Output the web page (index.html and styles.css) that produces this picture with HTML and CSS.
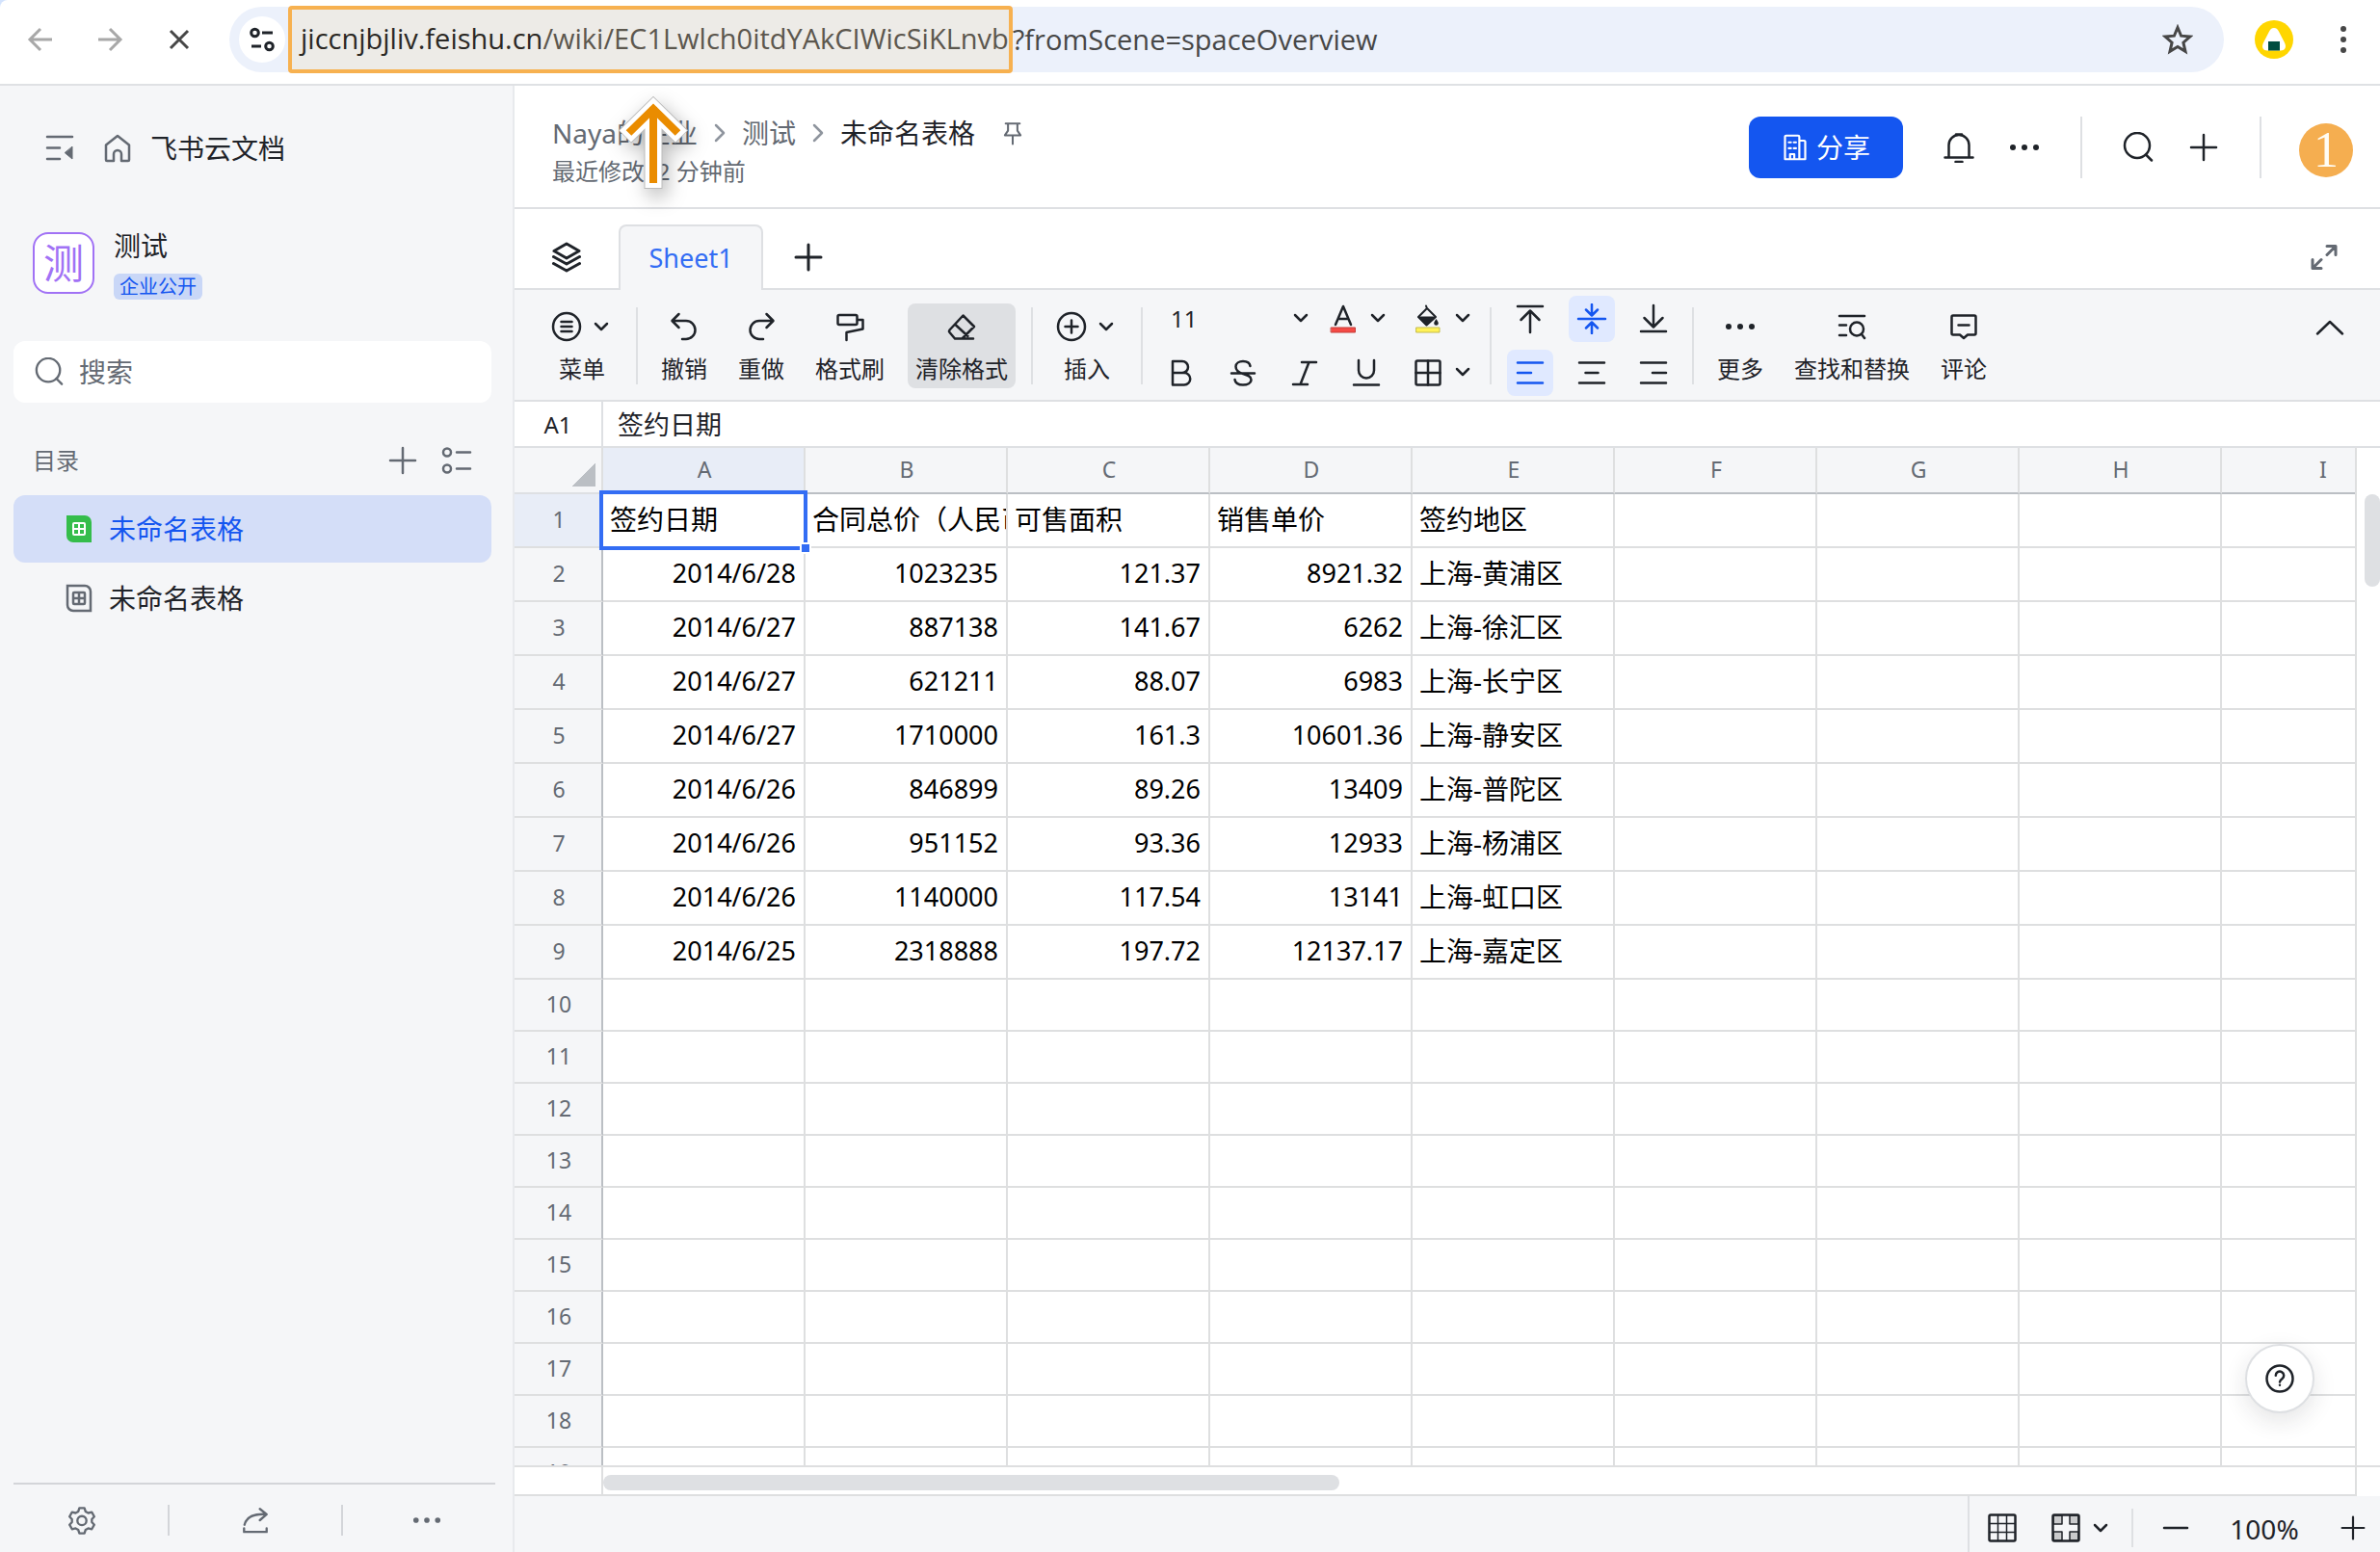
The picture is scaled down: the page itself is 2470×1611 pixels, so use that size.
FILE: index.html
```html
<!DOCTYPE html>
<html lang="zh-CN">
  <head>
    <meta charset="UTF-8" />
    <meta name="viewport" content="width=device-width, initial-scale=1.0" />
    <title>未命名表格</title>
    <link rel="stylesheet" href="styles.css">
  </head>
  <body>
    <!-- shared icons -->
    <svg class="sprite" aria-hidden="true">
      <symbol id="chevron" viewBox="0 0 24 24"><path d="M6 9l6 6 6-6" /></symbol>
      <symbol id="plus" viewBox="0 0 32 32"><path d="M16 3v26M3 16h26" /></symbol>
      <symbol id="dots" viewBox="0 0 32 32"><g fill="currentColor" stroke="none"><circle cx="4" cy="16" r="3" /><circle cx="16" cy="16" r="3" /><circle cx="28" cy="16" r="3" /></g></symbol>
      <symbol id="search" viewBox="0 0 32 32"><circle cx="15" cy="14" r="13" /><path d="M24 23.500l6 6" /></symbol>
      <symbol id="crumb" viewBox="0 0 16 28"><path d="M4 6l8 8-8 8" /></symbol>
    </svg>

    <header class="browser">
      <button class="nav back" aria-label="后退"><svg class="icon" viewBox="0 0 32 32"><path d="M28 16H5M16 5L5 16l11 11" /></svg></button>
      <button class="nav forward" aria-label="前进"><svg class="icon" viewBox="0 0 32 32"><path d="M4 16h23M16 5l11 11-11 11" /></svg></button>
      <button class="nav stop" aria-label="停止"><svg class="icon" viewBox="0 0 32 32"><path d="M7 7l18 18M25 7L7 25" /></svg></button>
      <div class="address">
        <button class="site-info" aria-label="网站信息"><svg class="icon" viewBox="0 0 32 32"><circle cx="8.500" cy="9" r="3.800" /><path d="M16 9h11M5 23h10" /><circle cx="23.500" cy="23" r="3.800" /></svg></button>
        <div class="url" role="textbox" aria-label="地址栏"><span class="marked"><span class="host">jiccnjbjliv.feishu.cn</span>/wiki/EC1Lwlch0itdYAkCIWicSiKLnvb</span><span>?fromScene=spaceOverview</span></div>
        <button class="star" aria-label="收藏"><svg class="icon" viewBox="0 0 32 32"><path d="M16 3.500l3.600 8.700 9.400.8-7.100 6.200 2.100 9.100-8-4.800-8 4.800 2.100-9.100L3 13l9.400-.8z" /></svg></button>
      </div>
      <button class="profile" aria-label="用户"><svg viewBox="0 0 40 40" width="40" height="40"><circle cx="20" cy="20" r="20" fill="#ffd600" /><path d="M20 8c2.500 0 4 1.500 5.300 4.200l5.400 10.600c3 5.800.3 8.700-3.700 8.700H13c-4 0-6.700-2.900-3.700-8.700l5.400-10.600C16 9.500 17.500 8 20 8z" fill="#fff" /><rect x="14" y="22" width="12" height="9.500" fill="#004d40" /></svg></button>
      <button class="kebab" aria-label="更多"><svg viewBox="0 0 8 32" width="8" height="32"><g fill="#474747"><circle cx="4" cy="5" r="3" /><circle cx="4" cy="16" r="3" /><circle cx="4" cy="27" r="3" /></g></svg></button>
    </header>

    <div class="app">
      <aside class="sidebar">
        <div class="brand">
          <button aria-label="收起侧栏"><svg class="icon" viewBox="0 0 32 32"><path d="M3 4h26M3 15.500h13M3 27h13" /><path d="M29 9.500v12.500l-7.500-6.200z" transform="translate(0 5)" fill="currentColor" stroke-width="1" /></svg></button>
          <a href="#" class="home"><svg class="icon" viewBox="0 0 32 32"><path d="M4 12.500L16 3l12 9.500V28a1 1 0 0 1-1 1h-7v-7a4 4 0 0 0-8 0v7H5a1 1 0 0 1-1-1z" /></svg><span>飞书云文档</span></a>
        </div>
        <div class="space">
          <span class="space-logo">测</span>
          <div class="space-info">
            <span class="space-name">测试</span>
            <span class="tag">企业公开</span>
          </div>
        </div>
        <label class="search-box">
          <svg class="icon"><use href="#search" /></svg>
          <input type="search" placeholder="搜索" aria-label="搜索" />
        </label>
        <div class="toc-head">
          <span>目录</span>
          <button aria-label="新建"><svg class="icon"><use href="#plus" /></svg></button>
          <button aria-label="目录设置"><svg class="icon" viewBox="0 0 32 32"><circle cx="6" cy="7.500" r="4" /><path d="M16 7.500h14M16 24.500h14" /><circle cx="6" cy="24.500" r="4" /></svg></button>
        </div>
        <nav class="toc">
          <a href="#" class="toc-item active"><svg viewBox="0 0 28 30" width="28" height="30"><path d="M1 1h19a7 7 0 0 1 7 7v21H8a7 7 0 0 1-7-7z" fill="#35bd4b" /><rect x="8" y="9" width="12" height="12" rx="1" fill="none" stroke="#fff" stroke-width="2" /><path d="M14 9v12M8 15h12" stroke="#fff" stroke-width="2" /></svg>未命名表格</a>
          <a href="#" class="toc-item"><svg viewBox="0 0 28 30" width="28" height="30" fill="none" stroke="#646a73" stroke-width="2.500"><path d="M2 2h18a6 6 0 0 1 6 6v20H8a6 6 0 0 1-6-6z" /><rect x="8" y="9" width="12" height="12" rx="1" /><path d="M14 9v12M8 15h12" /></svg>未命名表格</a>
        </nav>
        <div class="side-foot">
          <button class="settings" aria-label="设置"><svg class="icon" viewBox="0 0 32 32"><path d="M13.200 2.500h5.600l1.200 3.800 3 1.700 3.900-.9 2.800 4.900-2.700 2.900v3.200l2.700 2.900-2.800 4.900-3.900-.9-3 1.700-1.200 3.800h-5.600L12 26.700 9 25l-3.900.9L2.300 21 5 18.100v-3.200L2.300 12l2.800-4.900L9 8l3-1.700z" /><circle cx="16" cy="16.500" r="5" /></svg></button>
          <button aria-label="分享"><svg class="icon" viewBox="0 0 32 32"><path d="M4 21C6 13 13 8.500 28 9.500M21 3.500l7.500 6L21 16M3.500 25v4h25v-4" /></svg></button>
          <button class="side-more" aria-label="更多"><svg class="icon"><use href="#dots" /></svg></button>
        </div>
      </aside>

      <main class="doc">
        <div class="doc-head">
          <div class="doc-title">
            <div class="crumbs">
              <a href="#">Naya的企业</a>
              <svg class="crumb-sep"><use href="#crumb" /></svg>
              <a href="#">测试</a>
              <svg class="crumb-sep"><use href="#crumb" /></svg>
              <span class="current">未命名表格</span>
              <button class="pin" aria-label="固定"><svg class="icon" viewBox="0 0 32 32"><path d="M7 4h18M10 4.500V13l-4 6h20l-4-6V4.500M16 19v11" /></svg></button>
            </div>
            <div class="modified">最近修改: 2 分钟前</div>
            <svg class="arrow" viewBox="0 0 80 112" width="80" height="112"><g fill="none" stroke-linejoin="miter"><path d="M40 106V23M10.500 52L40 23l29.500 29" stroke="#bbb" stroke-width="19" /><path d="M40 105V23M11 51.500L40 23l29 28.500" stroke="#fff" stroke-width="17" /><path d="M40 100V21M14.500 48L40 23l25.500 25" stroke="#ea8c00" stroke-width="8" /></g></svg>
          </div>
          <button class="share"><svg class="icon" viewBox="0 0 32 32"><path d="M4 30V3.500A1.500 1.500 0 0 1 5.500 2h14A1.500 1.500 0 0 1 21 3.500V30zM21 8h5.500A1.500 1.500 0 0 1 28 9.500V30h-7M10 30v-6h5v6" /><path d="M8.500 10h2.500M14.500 10H17M8.500 17h2.500M14.500 17H17" /></svg>分享</button>
          <button class="bell" aria-label="通知"><svg class="icon" viewBox="0 0 32 32"><path d="M1.500 26.500h29M5.500 26V13.500a10.500 10.500 0 0 1 21 0V26M13 2.500h6M12.500 31h7" /></svg></button>
          <button class="more" aria-label="更多"><svg class="icon"><use href="#dots" /></svg></button>
          <span class="head-sep"></span>
          <button class="find" aria-label="搜索"><svg class="icon"><use href="#search" /></svg></button>
          <button class="add" aria-label="新建"><svg class="icon"><use href="#plus" /></svg></button>
          <span class="head-sep"></span>
          <button class="avatar" aria-label="账号">1</button>
        </div>

        <div class="tabs">
          <button class="layers" aria-label="工作表列表"><svg class="icon" viewBox="0 0 32 32"><path d="M16 2l13 7.500L16 17 3 9.500zM2.500 15.500L16 23l13.500-7.500M2.500 22.500L16 30l13.500-7.500" /></svg></button>
          <button class="tab">Sheet1</button>
          <button class="add-tab" aria-label="新建工作表"><svg class="icon"><use href="#plus" /></svg></button>
          <button class="expand" aria-label="全屏"><svg class="icon" viewBox="0 0 32 32"><path d="M19 4.500h9v9M27.500 5L19 13.500M4 18.500v9h9M4.500 27L13 18.500" /></svg></button>
        </div>

        <div class="toolbar">
          <button class="tool wide"><span class="tool-icons"><svg class="icon" viewBox="0 0 32 32"><circle cx="16" cy="16" r="14" /><path d="M10.500 11h11M10.500 16h11M10.500 21h11" /></svg><svg class="chev"><use href="#chevron" /></svg></span>菜单</button>
          <span class="sep"></span>
          <button class="tool"><svg class="icon" viewBox="0 0 32 32"><path d="M10.500 3L3.500 10l7 7M4 10h14a9.500 9.500 0 0 1 0 19h-4" /></svg>撤销</button>
          <button class="tool"><svg class="icon" viewBox="0 0 32 32"><path d="M21.500 3l7 7-7 7M28 10H14a9.500 9.500 0 0 0 0 19h4" /></svg>重做</button>
          <button class="tool"><svg class="icon" viewBox="0 0 32 32"><rect x="3.500" y="4" width="20" height="10" rx="1.500" /><path d="M24 9h5.500v9.500L12.500 22v8" /></svg>格式刷</button>
          <button class="tool pressed"><svg class="icon" viewBox="0 0 32 32"><path d="M17.500 4.500L29 16 16.500 28.500H9L3.500 22a2 2 0 0 1 0-2.500zM9.500 14l13 12M9 28.500h19" /></svg>清除格式</button>
          <span class="sep"></span>
          <button class="tool wide"><span class="tool-icons"><svg class="icon" viewBox="0 0 32 32"><circle cx="16" cy="16" r="14" /><path d="M16 9.500v13M9.500 16h13" /></svg><svg class="chev"><use href="#chevron" /></svg></span>插入</button>
          <span class="sep"></span>
          <div class="rows">
            <div class="row">
              <div class="size"><select aria-label="字号"><option>11</option></select><svg class="chev"><use href="#chevron" /></svg></div>
              <button class="pair" aria-label="字体颜色"><svg class="icon" viewBox="0 0 32 32"><path d="M8 22l8-19 8 19M10.500 16h11" /><rect x="3.500" y="25" width="25" height="5" fill="#f54a45" stroke="#c43f3b" stroke-width="1" /></svg><svg class="chev"><use href="#chevron" /></svg></button>
              <button class="pair" aria-label="填充颜色"><svg class="icon" viewBox="0 0 32 32"><path d="M14 2.500l1 3M15 5l9 9-9.500 8.500L6 14z" stroke-width="2" /><path d="M6 14h18l-9.500 8.500z" fill="currentColor" stroke-width="1" /><path d="M24.500 16c1.500 2 2.300 3.500 2.300 4.500a2.300 2.300 0 0 1-4.600 0c0-1 .8-2.500 2.300-4.500z" fill="currentColor" stroke="none" /><rect x="4" y="25" width="24" height="5" fill="#fff258" stroke="#c4bb4d" stroke-width="1" /></svg><svg class="chev"><use href="#chevron" /></svg></button>
            </div>
            <div class="row">
              <button class="cell" aria-label="加粗"><svg class="icon" viewBox="0 0 32 32"><path d="M7 4h10a6 6 0 0 1 0 12H7zM7 16h12a6 6 0 0 1 0 12.500H7z" /></svg></button>
              <button class="cell" aria-label="删除线"><svg class="icon" viewBox="0 0 32 32"><path d="M23.500 9c-.5-3.500-3.500-5-7.500-5s-7.500 2-7.500 5.500C8.500 13 11 15.500 16 17s8.500 2.500 8.500 6-4 5.500-8.500 5.500-8-2-8.500-5.500M4 16.500h24" /></svg></button>
              <button class="cell" aria-label="斜体"><svg class="icon" viewBox="0 0 32 32"><path d="M13 5h15M4 28h15M20.500 5l-9 23" /></svg></button>
              <button class="cell" aria-label="下划线"><svg class="icon" viewBox="0 0 32 32"><path d="M8 3v10.500a8 8 0 0 0 16 0V3M3 28.500h26" /></svg></button>
              <button class="pair" aria-label="边框"><svg class="icon" viewBox="0 0 32 32"><rect x="3.500" y="3.500" width="25" height="25" rx="1.500" /><path d="M16 3.500v25M3.500 16h25" /></svg><svg class="chev"><use href="#chevron" /></svg></button>
            </div>
          </div>
          <span class="sep"></span>
          <div class="rows">
            <div class="row">
              <button class="cell" aria-label="顶端对齐"><svg class="icon" viewBox="0 0 32 32"><path d="M3 3h26M16 30V8M6.500 17L16 7.500l9.500 9.500" /></svg></button>
              <button class="cell on" aria-label="垂直居中"><svg class="icon" viewBox="0 0 32 32"><path d="M2 16h28M16 1v11M10 6.500l6 6 6-6M16 31V20M10 25.500l6-6 6 6" /></svg></button>
              <button class="cell" aria-label="底端对齐"><svg class="icon" viewBox="0 0 32 32"><path d="M3 29h26M16 2v22M6.500 15l9.500 9.500 9.500-9.500" /></svg></button>
            </div>
            <div class="row">
              <button class="cell on" aria-label="左对齐"><svg class="icon" viewBox="0 0 32 32"><path d="M3 5.500h26M3 16h14M3 26.500h26" /></svg></button>
              <button class="cell" aria-label="居中对齐"><svg class="icon" viewBox="0 0 32 32"><path d="M3 5.500h26M9.500 16h13M3 26.500h26" /></svg></button>
              <button class="cell" aria-label="右对齐"><svg class="icon" viewBox="0 0 32 32"><path d="M3 5.500h26M15 16h14M3 26.500h26" /></svg></button>
            </div>
          </div>
          <span class="sep"></span>
          <button class="tool"><svg class="icon"><use href="#dots" /></svg>更多</button>
          <button class="tool"><svg class="icon" viewBox="0 0 32 32"><path d="M3 5h26M3 14.500h7M3 25h7" /><circle cx="21" cy="18.500" r="7" /><path d="M26 24l3 4" /></svg>查找和替换</button>
          <button class="tool"><svg class="icon" viewBox="0 0 32 32"><path d="M3.500 6A1.500 1.500 0 0 1 5 4.500h22A1.500 1.500 0 0 1 28.500 6v17a1.500 1.500 0 0 1-1.500 1.500h-7L16 28l-4-3.500H5A1.500 1.500 0 0 1 3.500 23zM10.500 14.500h11" /></svg>评论</button>
          <button class="collapse" aria-label="收起工具栏"><svg class="icon" viewBox="0 0 32 32"><path d="M3 22.500L16 10l13 12.500" /></svg></button>
        </div>

        <div class="formula">
          <span class="cell-ref">A1</span>
          <input type="text" value="签约日期" aria-label="单元格内容" />
        </div>

        <div class="sheet">
          <div class="grid-wrap">
            <table class="grid">
              <colgroup><col class="num-col" /><col span="9" /></colgroup>
              <thead>
                <tr><th class="corner" aria-label="全选"></th><th class="sel">A</th><th>B</th><th>C</th><th>D</th><th>E</th><th>F</th><th>G</th><th>H</th><th>I</th></tr>
              </thead>
              <tbody>
                <tr><th class="sel">1</th><td class="active-cell">签约日期</td><td>合同总价（人民币）</td><td>可售面积</td><td>销售单价</td><td>签约地区</td><td></td><td></td><td></td><td></td></tr>
                <tr><th>2</th><td class="n">2014/6/28</td><td class="n">1023235</td><td class="n">121.37</td><td class="n">8921.32</td><td>上海-黄浦区</td><td></td><td></td><td></td><td></td></tr>
                <tr><th>3</th><td class="n">2014/6/27</td><td class="n">887138</td><td class="n">141.67</td><td class="n">6262</td><td>上海-徐汇区</td><td></td><td></td><td></td><td></td></tr>
                <tr><th>4</th><td class="n">2014/6/27</td><td class="n">621211</td><td class="n">88.07</td><td class="n">6983</td><td>上海-长宁区</td><td></td><td></td><td></td><td></td></tr>
                <tr><th>5</th><td class="n">2014/6/27</td><td class="n">1710000</td><td class="n">161.3</td><td class="n">10601.36</td><td>上海-静安区</td><td></td><td></td><td></td><td></td></tr>
                <tr><th>6</th><td class="n">2014/6/26</td><td class="n">846899</td><td class="n">89.26</td><td class="n">13409</td><td>上海-普陀区</td><td></td><td></td><td></td><td></td></tr>
                <tr><th>7</th><td class="n">2014/6/26</td><td class="n">951152</td><td class="n">93.36</td><td class="n">12933</td><td>上海-杨浦区</td><td></td><td></td><td></td><td></td></tr>
                <tr><th>8</th><td class="n">2014/6/26</td><td class="n">1140000</td><td class="n">117.54</td><td class="n">13141</td><td>上海-虹口区</td><td></td><td></td><td></td><td></td></tr>
                <tr><th>9</th><td class="n">2014/6/25</td><td class="n">2318888</td><td class="n">197.72</td><td class="n">12137.17</td><td>上海-嘉定区</td><td></td><td></td><td></td><td></td></tr>
              </tbody>
              <tbody class="blank">
                <tr><th>10</th><td></td><td></td><td></td><td></td><td></td><td></td><td></td><td></td><td></td></tr>
                <tr><th>11</th><td></td><td></td><td></td><td></td><td></td><td></td><td></td><td></td><td></td></tr>
                <tr><th>12</th><td></td><td></td><td></td><td></td><td></td><td></td><td></td><td></td><td></td></tr>
                <tr><th>13</th><td></td><td></td><td></td><td></td><td></td><td></td><td></td><td></td><td></td></tr>
                <tr><th>14</th><td></td><td></td><td></td><td></td><td></td><td></td><td></td><td></td><td></td></tr>
                <tr><th>15</th><td></td><td></td><td></td><td></td><td></td><td></td><td></td><td></td><td></td></tr>
                <tr><th>16</th><td></td><td></td><td></td><td></td><td></td><td></td><td></td><td></td><td></td></tr>
                <tr><th>17</th><td></td><td></td><td></td><td></td><td></td><td></td><td></td><td></td><td></td></tr>
                <tr><th>18</th><td></td><td></td><td></td><td></td><td></td><td></td><td></td><td></td><td></td></tr>
                <tr><th>19</th><td></td><td></td><td></td><td></td><td></td><td></td><td></td><td></td><td></td></tr>
              </tbody>
            </table>
          </div>
          <div class="v-track"><div class="v-thumb"></div></div>
          <div class="h-track"><div class="h-thumb"></div></div>
          <div class="track-corner"></div>
          <button class="help" aria-label="帮助"><svg class="icon" viewBox="0 0 32 32"><circle cx="16" cy="16" r="13.500" /><path d="M11.800 12.800a4.200 4.200 0 1 1 6.600 3.400c-1.600 1.100-2.400 1.700-2.400 3.300" /><circle cx="16" cy="22.800" r="1.200" fill="currentColor" stroke="none" /></svg></button>
        </div>

        <footer class="status">
          <button class="view-grid" aria-label="网格线"><svg class="icon" viewBox="0 0 32 32"><rect x="2.500" y="2.500" width="27" height="27" rx="1.500" /><path d="M11.500 3v26M20.500 3v26M3 11.500h26M3 20.500h26" stroke-width="1.500" /></svg></button>
          <button class="view-focus" aria-label="聚焦"><svg class="icon" viewBox="0 0 32 32"><path d="M3 3h9v9H3zM20 3h9v9h-9zM3 20h9v9H3zM20 20h9v9h-9z" fill="#c9cacc" stroke-width="1.500" /><rect x="2.500" y="2.500" width="27" height="27" rx="1.500" /></svg><svg class="chev"><use href="#chevron" /></svg></button>
          <span class="status-sep"></span>
          <button class="zoom-out" aria-label="缩小"><svg class="icon" viewBox="0 0 32 32"><path d="M4 16h24" /></svg></button>
          <span class="zoom">100%</span>
          <button class="zoom-in" aria-label="放大"><svg class="icon"><use href="#plus" /></svg></button>
        </footer>
      </main>
    </div>
  </body>
</html>
```

FILE: styles.css
```css
*,
*::before,
*::after {
  box-sizing: border-box;
}
body {
  margin: 0;
  height: 100vh;
  display: flex;
  flex-direction: column;
  background-color: #d3e3fd;
  color: #1f2329;
  font-family: "Noto Sans", "Noto Sans CJK SC", sans-serif;
  font-size: 28px;
  line-height: 40px;
}
button,
input,
select {
  margin: 0;
  padding: 0;
  border: 0;
  background: none;
  color: inherit;
  font: inherit;
}
button {
  display: flex;
  align-items: center;
  justify-content: center;
  flex: none;
}
a {
  color: inherit;
  text-decoration: none;
}
svg {
  display: block;
  flex: none;
}
.sprite {
  position: absolute;
  width: 0;
  height: 0;
}
.icon,
.chev,
.crumb-sep {
  fill: none;
  stroke: currentColor;
  stroke-width: 2.5;
  stroke-linecap: round;
  stroke-linejoin: round;
}
.icon {
  width: 32px;
  height: 32px;
}
.chev {
  width: 24px;
  height: 24px;
}

/* browser bar */
.browser {
  display: flex;
  align-items: center;
  height: 89px;
  padding: 0 34px 6px 26px;
  flex: none;
  background-color: #fff;
  border-bottom: 2px solid #dfe1e4;
  border-top-left-radius: 8px;
}
.nav {
  margin-right: 40px;
}
.browser .icon {
  stroke-width: 3;
  stroke-linecap: butt;
  stroke-linejoin: miter;
}
.back,
.forward {
  color: #a8a8a8;
}
.stop {
  margin-right: 36px;
  color: #474747;
}
.address {
  display: flex;
  align-items: center;
  flex: 1;
  height: 68px;
  padding: 0 32px 0 10px;
  border-radius: 34px;
  background-color: #ecf1fb;
}
.site-info {
  width: 48px;
  height: 48px;
  border-radius: 50%;
  background-color: #fff;
}
.url {
  display: flex;
  align-items: center;
  flex: 1;
  padding-left: 3px;
  color: #474747;
  font-family: "Open Sans", "Noto Sans", sans-serif;
  font-size: 29px;
}
.marked {
  height: 70px;
  padding-left: 9px;
  border: 4px solid #f7b150;
  border-radius: 4px;
  background-color: #edebe7;
  color: #5c574e;
  line-height: 60px;
}
.host {
  color: #2b2824;
}
.star {
  color: #474747;
}
.profile {
  margin-left: 32px;
}
.kebab {
  margin-left: 48px;
}

.app {
  display: flex;
  flex: 1;
  min-height: 0;
}

/* sidebar */
.sidebar {
  display: flex;
  flex-direction: column;
  flex: none;
  width: 534px;
  background-color: #f5f6f8;
  border-right: 2px solid #e8eaed;
}
.brand {
  display: flex;
  align-items: center;
  gap: 28px;
  padding: 45px 0 0 46px;
  color: #646a73;
}
.home {
  display: flex;
  align-items: center;
  gap: 18px;
}
.home span {
  color: #1f2329;
}
.space {
  display: flex;
  align-items: center;
  gap: 20px;
  margin: 61px 0 0 34px;
}
.space-logo {
  width: 64px;
  height: 64px;
  border: 2px solid #a172f5;
  border-radius: 16px;
  background-color: #fff;
  color: #a172f5;
  font-size: 42px;
  line-height: 60px;
  text-align: center;
}
.space-info {
  display: flex;
  flex-direction: column;
  align-items: flex-start;
  gap: 9px;
}
.tag {
  padding: 0 6px;
  border-radius: 6px;
  background-color: #c9d7f7;
  color: #1456f0;
  font-size: 20px;
  line-height: 27px;
}
.search-box {
  display: flex;
  align-items: center;
  gap: 16px;
  height: 64px;
  margin: 43px 22px 0 14px;
  padding: 0 22px;
  border-radius: 12px;
  background-color: #fff;
  color: #646a73;
}
.search-box .icon {
  width: 30px;
  height: 30px;
}
.search-box input {
  flex: 1;
  min-width: 0;
  outline: none;
}
.search-box input::placeholder {
  color: #646a73;
  opacity: 1;
}
.toc-head {
  display: flex;
  align-items: center;
  gap: 24px;
  margin: 40px 42px 0 34px;
  color: #646a73;
  font-size: 24px;
}
.toc-head span {
  flex: 1;
}
.toc {
  display: flex;
  flex-direction: column;
  flex: 1;
  gap: 2px;
  margin: 16px 22px 0 14px;
}
.toc-item {
  display: flex;
  align-items: center;
  gap: 17px;
  height: 70px;
  padding-left: 54px;
  border-radius: 12px;
}
.toc-item.active {
  background-color: #d4def8;
  color: #1456f0;
}
.side-foot {
  display: grid;
  grid-template-columns: 160px 180px 1fr;
  align-items: center;
  height: 72px;
  margin: 0 18px 0 14px;
  padding-top: 4px;
  border-top: 2px solid #d3d5d9;
  color: #646a73;
}
.side-foot button {
  height: 32px;
}
.side-foot button + button {
  border-left: 2px solid #d3d5d9;
}
.side-foot .settings {
  padding-right: 18px;
}
.side-foot .side-more {
  padding-left: 16px;
}
.side-foot .icon {
  width: 30px;
  height: 30px;
}

/* document header */
.doc {
  display: flex;
  flex-direction: column;
  flex: 1;
  min-width: 0;
  background-color: #fff;
}
.doc-head {
  display: flex;
  align-items: center;
  height: 128px;
  padding: 2px 28px 0 39px;
  flex: none;
  border-bottom: 2px solid #dee0e3;
}
.doc-title {
  position: relative;
  flex: 1;
  padding-top: 10px;
  color: #646a73;
}
.crumbs {
  display: flex;
  align-items: center;
  gap: 16px;
  line-height: 40px;
}
.crumb-sep {
  width: 16px;
  height: 28px;
  color: #8f959e;
}
.crumbs a + .crumb-sep {
  margin: 0 -1px;
}
.current {
  color: #1f2329;
}
.pin {
  margin-left: 10px;
}
.pin .icon {
  width: 26px;
  height: 26px;
}
.modified {
  font-size: 24px;
}
.arrow {
  position: absolute;
  left: 65px;
  top: -18px;
  filter: drop-shadow(4px 8px 10px rgba(0, 0, 0, 0.3));
}
.share {
  gap: 8px;
  width: 160px;
  height: 64px;
  border-radius: 12px;
  background-color: #1456f0;
  color: #fff;
}
.share .icon {
  width: 28px;
  height: 28px;
}
.bell {
  margin-left: 42px;
}
.more {
  margin-left: 36px;
}
.head-sep {
  width: 2px;
  height: 64px;
  background-color: #dee0e3;
}
.more + .head-sep {
  margin: 0 42px;
}
.add {
  margin: 0 42px 0 36px;
}
.avatar {
  width: 56px;
  height: 56px;
  margin: 6px 0 0 39px;
  border-radius: 50%;
  background-color: #f5ae50;
  color: #fffdf5;
  font-family: "Liberation Serif", serif;
  font-size: 52px;
  line-height: 56px;
}

/* sheet tabs */
.tabs {
  display: flex;
  align-items: flex-end;
  height: 84px;
  flex: none;
  padding: 0 42px 0 38px;
  box-shadow: inset 0 -2px #dee0e3;
}
.tabs button {
  height: 68px;
}
.tabs .tab {
  width: 150px;
  margin: 0 31px 0 38px;
  border: 2px solid #dee0e3;
  border-bottom: 0;
  border-radius: 8px 8px 0 0;
  background-color: #f5f6f8;
  color: #336df4;
  font-size: 27px;
}
.expand {
  margin-left: auto;
  color: #646a73;
}
.expand .icon {
  stroke-width: 3;
}
.layers .icon,
.add-tab .icon {
  stroke-width: 3;
}

/* toolbar */
.toolbar {
  display: flex;
  align-items: center;
  gap: 16px;
  height: 116px;
  padding: 6px 36px 4px 30px;
  flex: none;
  background-color: #f5f6f8;
  border-bottom: 2px solid #dee0e3;
}
.tool {
  flex-direction: column;
  gap: 10px;
  height: 88px;
  padding: 5px 8px 0;
  border-radius: 8px;
  font-size: 24px;
  line-height: 36px;
}
.tool.wide {
  width: 80px;
}
.tool.pressed {
  background-color: #dee0e3;
}
.tool-icons {
  display: flex;
  align-items: center;
  gap: 8px;
}
.sep {
  width: 2px;
  height: 80px;
  background-color: #dee0e3;
}
.rows {
  display: flex;
  flex-direction: column;
  gap: 8px;
}
.row {
  display: flex;
  gap: 16px;
}
.size {
  display: grid;
  align-items: center;
  width: 160px;
  margin-right: -8px;
}
.size select,
.size .chev {
  grid-area: 1 / 1;
}
.size select {
  appearance: none;
  padding-left: 13px;
  font-size: 24px;
  line-height: 36px;
}
.size .chev {
  justify-self: end;
  pointer-events: none;
}
.cell {
  width: 48px;
  height: 48px;
  border-radius: 8px;
}
.cell.on {
  background-color: #e0e9ff;
  color: #1456f0;
}
.pair {
  gap: 8px;
  width: 72px;
  height: 48px;
  padding-left: 8px;
}
.pair .chev,
.size .chev {
  margin-bottom: 2px;
}
.collapse {
  margin: 0 0 38px auto;
}

/* formula bar */
.formula {
  display: flex;
  height: 48px;
  flex: none;
  border-bottom: 2px solid #dee0e3;
}
.cell-ref {
  width: 92px;
  border-right: 2px solid #dee0e3;
  font-size: 24px;
  line-height: 48px;
  text-align: center;
}
.formula input {
  flex: 1;
  padding: 2px 15px 0;
  font-size: 27px;
}

/* grid */
.sheet {
  position: relative;
  display: grid;
  grid-template-columns: 1fr 26px;
  grid-template-rows: 1fr 32px;
  flex: 1;
  min-height: 0;
}
.grid-wrap {
  min-width: 0;
  min-height: 0;
  overflow: hidden;
}
.grid {
  width: 1982px;
  table-layout: fixed;
  border-spacing: 0;
}
.num-col {
  width: 92px;
}
.grid th,
.grid td {
  height: 56px;
  padding: 0 8px 2px 7px;
  border-right: 2px solid #dedfe0;
  border-bottom: 2px solid #dedfe0;
  overflow: hidden;
  white-space: nowrap;
  line-height: 40px;
}
.grid td {
  color: #000;
  font-size: 28px;
}
.grid .n {
  font-size: 27px;
  text-align: right;
}
.grid th {
  padding: 0 6px 2px 8px;
  background-color: #f5f6f8;
  color: #646a73;
  font-size: 23px;
  font-weight: 400;
}
.grid thead th {
  height: 48px;
  border-bottom-color: #bbbfc4;
}
.grid tbody th {
  border-right-color: #bbbfc4;
}
.grid .blank th,
.grid .blank td {
  height: 54px;
}
.grid th.sel {
  background-color: #e8edf7;
}
.grid .corner {
  background-color: #f5f6f8;
  background-image: linear-gradient(135deg, transparent 50%, #bbbfc4 50%);
  background-repeat: no-repeat;
  background-position: right 6px bottom 6px;
  background-size: 24px 24px;
  border-bottom-color: #dee0e3;
}
/* selection frame with its fill handle */
.grid .active-cell {
  position: relative;
  overflow: visible;
}
.active-cell::before {
  content: "";
  position: absolute;
  inset: -4px;
  border: 4px solid #336df4;
}
.active-cell::after {
  content: "";
  position: absolute;
  right: -8px;
  bottom: -8px;
  width: 12px;
  height: 12px;
  border: 2px solid #fff;
  background-color: #336df4;
}
.v-track {
  display: flex;
  justify-content: flex-end;
  padding-top: 48px;
  border-left: 2px solid #dedfe0;
}
.v-thumb {
  width: 16px;
  height: 96px;
  border-radius: 8px;
  background-color: #dee0e3;
}
.h-track {
  display: flex;
  align-items: center;
  padding-left: 90px;
  border-top: 2px solid #dedfe0;
  border-bottom: 2px solid #dedfe0;
}
.h-track::before {
  content: "";
  width: 2px;
  height: 100%;
  background-color: #dedfe0;
}
.h-thumb {
  width: 42%;
  height: 16px;
  margin-top: 4px;
  border-radius: 8px;
  background-color: #dee0e3;
}
.track-corner {
  border-top: 2px solid #dedfe0;
  border-left: 2px solid #dedfe0;
}
.help {
  position: absolute;
  right: 68px;
  bottom: 86px;
  width: 72px;
  height: 72px;
  border: 2px solid #dee0e3;
  border-radius: 50%;
  background-color: #fff;
  box-shadow: 0 8px 24px rgba(31, 35, 41, 0.12);
}

/* status bar */
.status {
  display: flex;
  align-items: center;
  justify-content: flex-end;
  height: 58px;
  flex: none;
  padding: 8px 12px 0 0;
  background-color: #f5f6f8;
}
.view-grid {
  height: 58px;
  margin: -8px 34px 0 0;
  padding: 8px 0 0 18px;
  border-left: 2px solid #dee0e3;
}
.view-focus {
  gap: 8px;
}
.status-sep {
  width: 2px;
  height: 40px;
  margin: 0 28px 0 20px;
  background-color: #dee0e3;
}
.zoom {
  width: 152px;
  padding-top: 2px;
  font-size: 28px;
  text-align: center;
}
.zoom-in .icon {
  width: 28px;
  height: 28px;
  margin: 0 2px;
}
```
